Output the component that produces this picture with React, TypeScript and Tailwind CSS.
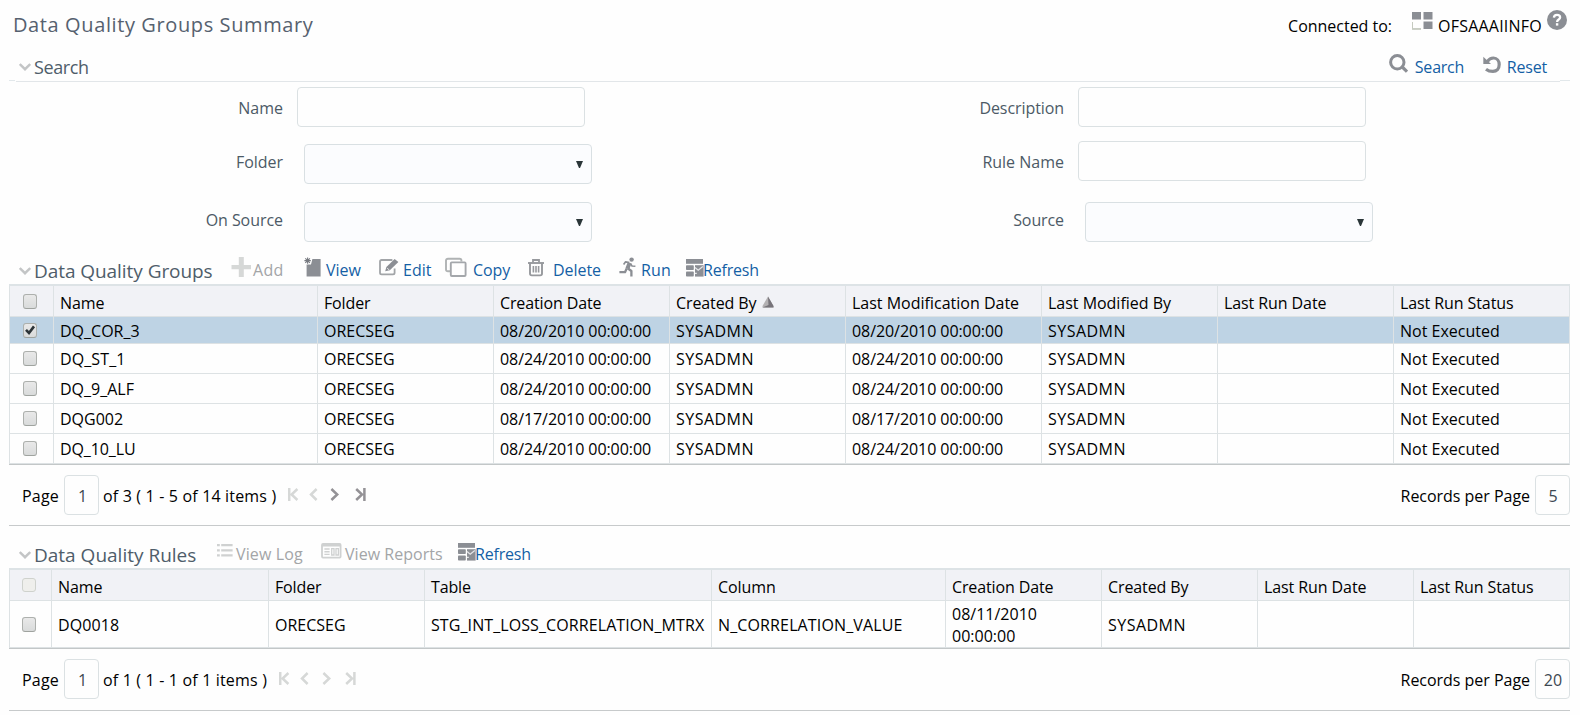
import type { ReactNode } from 'react';

const GRAY = '#8b8e94';
const PALE = '#d6d8d7';

/* ---------- icons ---------- */

const Chevron = () => (
  <svg width="12" height="8" viewBox="0 0 12 8" fill="none" stroke="#c3c5c6" strokeWidth="2.4">
    <path d="M0.8 1 L6 6.2 L11.2 1" />
  </svg>
);

const GridIcon = () => (
  <svg width="21" height="18" viewBox="0 0 21 18" fill={GRAY}>
    <rect x="0" y="0" width="9" height="7.5" />
    <rect x="11.5" y="0" width="9" height="7.5" />
    <rect x="11.5" y="9.5" width="9" height="7.5" />
    <path d="M0.5 10 V16.8 H9" fill="none" stroke="#c5cabf" />
    <path d="M0 17 H9" stroke="#c5cabf" strokeWidth="1.6" />
  </svg>
);

const HelpIcon = () => (
  <svg width="20" height="20" viewBox="0 0 20 20">
    <circle cx="10" cy="10" r="10" fill={GRAY} />
    <path d="M6.9 7.6 C7 5.6 8.3 4.8 10 4.8 C11.8 4.8 13.1 5.8 13.1 7.4 C13.1 9.6 10.1 9.4 10.1 11.9" fill="none" stroke="#fff" strokeWidth="2.3" />
    <rect x="8.9" y="13.2" width="2.4" height="2.4" fill="#fff" />
  </svg>
);

const SearchIcon = () => (
  <svg width="19" height="19" viewBox="0 0 19 19" fill="none" stroke={GRAY}>
    <circle cx="8.3" cy="8.3" r="6.7" strokeWidth="3" />
    <path d="M13.3 13 L18 17.7" strokeWidth="3.2" />
  </svg>
);

const ResetIcon = () => (
  <svg width="18" height="18" viewBox="0 0 18 18" fill="none" stroke={GRAY}>
    <path d="M4.2 5.6 C6 3 8.3 2 10.5 2 C14 2 16.2 5 16.2 8.6 C16.2 12.8 13.6 15.4 10 15.4 C7 15.4 4.8 14.6 3 13.2" strokeWidth="3.2" />
    <path d="M0.3 0.8 V8 H8 Z" fill={GRAY} stroke="none" />
  </svg>
);

const AddIcon = () => (
  <svg width="20" height="20" viewBox="0 0 20 20" fill={PALE}>
    <path d="M7.8 0 h5 v8 H20 v4.2 h-7.2 V20 h-5 v-7.8 H0.5 V8 H7.8 Z" />
  </svg>
);

const ViewIcon = () => (
  <svg width="18" height="20" viewBox="0 0 18 20">
    <path d="M8.4 2 H16.6 V19.6 H2.6 V7.6 H7 Z" fill={GRAY} />
    <path d="M3.6 0.4 V6.8 M0.4 3.6 H6.8 M1.3 1.3 L5.9 5.9 M5.9 1.3 L1.3 5.9" stroke="#777a80" strokeWidth="1.1" />
  </svg>
);

const EditIcon = () => (
  <svg width="20" height="20" viewBox="0 0 20 20" fill="none">
    <path d="M13.4 3 H2.6 Q1 3 1 4.6 V15.8 Q1 17.4 2.6 17.4 H14 Q15.6 17.4 15.6 15.8 V11.5" stroke="#a2a5a8" strokeWidth="1.8" />
    <path d="M6.2 14.2 L7.4 10 L15.6 1.9 L19.4 5.1 L10.8 13.2 Z" fill={GRAY} />
    <path d="M8.4 11.2 L10 12.8" stroke="#fff" />
  </svg>
);

const CopyIcon = () => (
  <svg width="22" height="20" viewBox="0 0 22 20" fill="none" strokeWidth="1.9">
    <path d="M5 14.2 H3 Q1 14.2 1 12.4 V3.6 Q1 1.8 3 1.8 H14.6 Q16.4 1.8 16.4 3.6 V4.6" stroke="#b0b3b4" />
    <rect x="5.8" y="5.4" width="14.8" height="13.6" rx="1" stroke="#a4a7ab" />
  </svg>
);

const DeleteIcon = () => (
  <svg width="16" height="20" viewBox="0 0 16 20" fill="none" stroke="#97999d">
    <path d="M0 6 H16" strokeWidth="1.9" />
    <path d="M5 5.4 V3 H11 V5.4" strokeWidth="1.8" />
    <path d="M2 6 V16.6 Q2 18.4 3.8 18.4 H12.2 Q14 18.4 14 16.6 V6" strokeWidth="1.9" />
    <path d="M5.4 9 V15.6 M8 9 V15.6 M10.6 9 V15.6" strokeWidth="1.6" />
  </svg>
);

const RunIcon = () => (
  <svg width="18" height="20" viewBox="0 0 18 20" fill="none" stroke={GRAY} strokeLinejoin="round">
    <circle cx="12.6" cy="2.6" r="2.2" fill={GRAY} stroke="none" />
    <path d="M4.6 7.4 L6.6 4.8 L10.4 5.6" strokeWidth="1.7" />
    <path d="M10.6 6 L8.4 11.4" strokeWidth="4" />
    <path d="M11.4 6.4 L13 9 L16.4 9.2" strokeWidth="1.6" />
    <path d="M8.6 11.2 L12.4 14 V19.6" strokeWidth="2.3" />
    <path d="M7.8 11.2 L6 15.2 H0.4" strokeWidth="2.3" />
  </svg>
);

const RefreshIcon = () => (
  <svg width="18" height="20" viewBox="0 0 18 20" fill={GRAY}>
    <rect x="0" y="2" width="17" height="4.8" />
    <rect x="0" y="8.2" width="7.8" height="4.9" rx="0.8" />
    <rect x="0" y="14.6" width="7.8" height="5" rx="0.8" />
    <path d="M9 8.2 H17.6 V19.6 H9 Z" />
    <path d="M9 10.6 L12.2 13.2 L16.8 9.4" fill="none" stroke="#e4e5e8" strokeWidth="1.3" />
    <path d="M9 16.4 H10.8" stroke="#e9eaec" strokeWidth="1.2" />
  </svg>
);

const LogIcon = () => (
  <svg width="16" height="20" viewBox="0 0 16 20" stroke="#cfd1d1" strokeWidth="2.2">
    <path d="M0 4.2 H2.8 M4.2 4.2 H15.6 M0 9.4 H2.8 M4.2 9.4 H15.6 M0 14.4 H2.8 M4.2 14.4 H15.6" />
  </svg>
);

const ReportsIcon = () => (
  <svg width="21" height="20" viewBox="0 0 21 20" fill="none" stroke="#cfd1d1">
    <rect x="1" y="3" width="18.6" height="13.6" rx="1" strokeWidth="1.8" />
    <path d="M1 4.2 H19.6" strokeWidth="2.6" />
    <path d="M3.4 8 H8.6 M3.4 10.7 H8.6 M3.4 13.4 H8.6" strokeWidth="1.4" />
    <path d="M10.7 7.6 H13 V14 H10.7 Z M15 7.6 H17.4 V14 H15 Z" strokeWidth="1.3" />
  </svg>
);

const NAV: Record<string, string> = {
  first: 'M1.2 0 V13 M9.4 1 L3.6 6.5 L9.4 12',
  prev: 'M7.6 1 L2 6.5 L7.6 12',
  next: 'M1.4 1 L7.2 6.5 L1.4 12',
  last: 'M1.2 1 L7 6.5 L1.2 12 M9.4 0 V13',
};

const NavIcon = ({ kind, on, className }: { kind: string; on?: boolean; className: string }) => (
  <span className={className}>
    <svg width="11" height="13" viewBox="0 0 11 13" fill="none" strokeWidth="2.5" stroke={on ? '#949296' : '#d6d8d7'}>
      <path d={NAV[kind]} />
    </svg>
  </span>
);

const Checkbox = ({ checked, pale }: { checked?: boolean; pale?: boolean }) => (
  <span
    className={
      pale
        ? 'block size-[14px] rounded-[3px] border border-[#cfd2cd] bg-[#efefec]'
        : 'block h-[15px] w-[14px] rounded-[3px] border border-[#adb0ad] border-b-[#9fa39f] bg-linear-to-b from-[#e9e9e9] to-[#d9dbdb]'
    }
  >
    {checked && (
      <svg width="12" height="12" viewBox="0 0 12 12" fill="none" stroke="#2c3438" strokeWidth="2.6">
        <path d="M2 5.8 L5 9 L10 2.4" />
      </svg>
    )}
  </span>
);

/* ---------- search form ---------- */

const TextBox = () => <input className="h-10 w-[288px] rounded border border-[#dbe1e3] bg-[#fefefe]" />;

const Dropdown = () => (
  <div className="flex h-10 w-[288px] items-start justify-end rounded border border-[#d9e0e3] bg-[#fbfcfe] pt-4 pr-2">
    <svg width="7" height="7" viewBox="0 0 7 7">
      <path d="M0 0 H7 L4 7 H3 Z" fill="#2a3538" />
    </svg>
  </div>
);

const Label = ({ className, children }: { className: string; children: ReactNode }) => (
  <label className={`text-right leading-6 text-[#4c5a66] ${className}`}>{children}</label>
);

/* ---------- toolbars ---------- */

const Action = ({ icon, gutter, className, off, children }: { icon: ReactNode; gutter: string; className: string; off?: boolean; children: ReactNode }) => (
  <div className={`flex shrink-0 items-start whitespace-nowrap ${className}`}>
    <span className={`shrink-0 pt-px ${gutter}`}>{icon}</span>
    <span className={off ? 'pt-0.5 text-[#a3a5a7]' : 'pt-0.5 text-[#145fa5]'}>{children}</span>
  </div>
);

const Heading = ({ className, children }: { className: string; children: ReactNode }) => (
  <h2 className={`flex shrink-0 items-start gap-[3px] pl-[10px] leading-7 whitespace-nowrap text-[#4f5d6a] ${className}`}>
    <span className="pt-[11px]">
      <Chevron />
    </span>
    <span className="pt-px">{children}</span>
  </h2>
);

/* ---------- grids ---------- */

const groupHeads = [
  ['Name', 'tracking-[-0.1px]'],
  ['Folder', 'tracking-[-0.14px]'],
  ['Creation Date', 'tracking-[-0.13px]'],
  ['Created By', 'tracking-[-0.1px]'],
  ['Last Modification Date', ''],
  ['Last Modified By', 'tracking-[-0.02px]'],
  ['Last Run Date', 'tracking-[-0.09px]'],
  ['Last Run Status', 'tracking-[-0.09px]'],
];

const groups = [
  { name: 'DQ_COR_3', date: '08/20/2010 00:00:00', track: '', selected: true },
  { name: 'DQ_ST_1', date: '08/24/2010 00:00:00', track: 'tracking-[0.1px]' },
  { name: 'DQ_9_ALF', date: '08/24/2010 00:00:00', track: '' },
  { name: 'DQG002', date: '08/17/2010 00:00:00', track: '' },
  { name: 'DQ_10_LU', date: '08/24/2010 00:00:00', track: 'tracking-[-0.1px]' },
];

const ruleHeads = [
  ['Name', 'tracking-[-0.1px]'],
  ['Folder', 'tracking-[-0.14px]'],
  ['Table', 'tracking-[-0.13px]'],
  ['Column', 'tracking-[-0.07px]'],
  ['Creation Date', 'tracking-[-0.13px]'],
  ['Created By', 'tracking-[-0.1px]'],
  ['Last Run Date', 'tracking-[-0.09px]'],
  ['Last Run Status', 'tracking-[-0.09px]'],
];

const groupCols = 'grid grid-cols-[44px_264px_176px_176px_176px_196px_176px_176px_176px]';
const ruleCols = 'grid grid-cols-[42px_217px_156px_287px_234px_156px_156px_156px_156px]';

const Cell = ({ className = '', children }: { className?: string; children?: ReactNode }) => (
  <div className={`border-l border-[#dde2e4] pl-[6px] leading-6 whitespace-nowrap ${className}`}>{children}</div>
);

const Pager = ({ range, size, track, className, nav }: { range: string; size: string; track: string; className: string; nav: ReactNode }) => (
  <div className={`flex items-start border-b border-[#c7cacb] pt-[10px] ${className}`}>
    <span className="w-[55px] pt-[9px] pl-[13px] leading-6 tracking-[0.2px]">Page</span>
    <span className="h-10 w-[35px] rounded border border-[#dbe1e3] pt-2 pl-0.5 text-center leading-6 text-[#3d4852]">1</span>
    <span className={`pt-[9px] pl-1 leading-6 whitespace-pre ${track}`}>{range}</span>
    <div className="flex pt-[13px]">{nav}</div>
    <span className="ml-auto pt-[9px] pr-[5px] leading-6 tracking-[-0.03px]">Records per Page</span>
    <span className="h-10 w-[35px] rounded border border-[#dbe1e3] pt-2 pl-px text-center leading-6 text-[#3d4852]">{size}</span>
  </div>
);

export default function App() {
  return (
    <div className="h-[715px] w-[1580px] overflow-hidden bg-[#fefefe] pr-[10px] pl-[9px] font-['Open_Sans','Noto_Sans',sans-serif] text-base leading-6 text-black">
      {/* page header */}
      <header className="flex h-[50px] items-start">
        <h1 className="pt-[10px] pl-1 text-[20px] leading-[30px] tracking-[0.61px] text-[#56616f]">Data Quality Groups Summary</h1>
        <span className="ml-auto pt-[14px] tracking-[-0.02px]">Connected to:</span>
        <span className="w-[46px] pt-3 pl-5">
          <GridIcon />
        </span>
        <span className="w-[109px] pt-[14px] tracking-[0.22px]">OFSAAAIINFO</span>
        <span className="pt-[10px] pr-[3px]">
          <HelpIcon />
        </span>
      </header>

      {/* search */}
      <div className="flex h-[30px] items-start">
        <Heading className="pt-0.5 text-[18px] tracking-[-0.4px]">Search</Heading>
        <div className="ml-auto flex pr-[23px] text-[#145fa5]">
          <span className="w-[26px] pt-1">
            <SearchIcon />
          </span>
          <span className="w-[68px] pt-[5px] tracking-[-0.22px]">Search</span>
          <span className="w-[24px] pt-[6px]">
            <ResetIcon />
          </span>
          <span className="pt-[5px] tracking-[-0.2px]">Reset</span>
        </div>
      </div>
      <div className="flex h-[7px] items-start">
        <span className="h-px w-[6px] bg-[#e2e8eb]" />
        <span className="mt-px ml-px h-px flex-1 bg-[#e2e6e9]" />
        <span className="h-px w-[10px] bg-[#e2e8eb]" />
      </div>

      <div className="flex h-[161px]">
        <div className="flex w-[781px] flex-col">
          <div className="flex h-[54px]">
            <Label className="w-[274px] pt-[9px]">Name</Label>
            <div className="pl-[14px]">
              <TextBox />
            </div>
          </div>
          <div className="flex h-[58px]">
            <Label className="w-[274px] pt-[9px] tracking-[-0.05px]">Folder</Label>
            <div className="pt-[3px] pl-[21px]">
              <Dropdown />
            </div>
          </div>
          <div className="flex h-[49px]">
            <Label className="w-[274px] pt-[9px] tracking-[-0.05px]">On Source</Label>
            <div className="pt-[3px] pl-[21px]">
              <Dropdown />
            </div>
          </div>
        </div>
        <div className="flex flex-col">
          <div className="flex h-[54px]">
            <Label className="w-[274px] pt-[9px] tracking-[-0.08px]">Description</Label>
            <div className="pl-[14px]">
              <TextBox />
            </div>
          </div>
          <div className="flex h-[58px]">
            <Label className="w-[274px] pt-[9px]">Rule Name</Label>
            <div className="pl-[14px]">
              <TextBox />
            </div>
          </div>
          <div className="flex h-[49px]">
            <Label className="w-[274px] pt-[9px] tracking-[-0.1px]">Source</Label>
            <div className="pt-[3px] pl-[21px]">
              <Dropdown />
            </div>
          </div>
        </div>
      </div>

      {/* groups */}
      <div className="flex h-9 items-start pt-2">
        <Heading className="w-[222px] text-[19px] tracking-[-0.06px]">Data Quality Groups</Heading>
        <Action icon={<AddIcon />} gutter="w-[22px]" className="w-[73px] tracking-[0.3px]" off>Add</Action>
        <Action icon={<ViewIcon />} gutter="w-[22px]" className="w-[75px]">View</Action>
        <Action icon={<EditIcon />} gutter="w-[24px]" className="w-[66px]">Edit</Action>
        <Action icon={<CopyIcon />} gutter="w-[28px]" className="w-[83px] tracking-[-0.1px]">Copy</Action>
        <Action icon={<DeleteIcon />} gutter="w-[25px]" className="w-[91px] tracking-[-0.06px]">Delete</Action>
        <Action icon={<RunIcon />} gutter="w-[22px]" className="w-[67px] tracking-[0.1px]">Run</Action>
        <Action icon={<RefreshIcon />} gutter="w-[17px]" className="tracking-[-0.2px]">Refresh</Action>
      </div>

      <div className="border-t-2 border-r border-b border-[#dde3e6] border-b-[#c3c7c8]">
        <div className={`h-[31px] border-b border-[#dde2e4] bg-[#f1f2f6] ${groupCols}`}>
          <Cell className="pt-2 !pl-[13px]">
            <Checkbox />
          </Cell>
          {groupHeads.map(([t, track]) => (
            <Cell key={t} className={`flex gap-[6px] pt-[5px] ${track}`}>
              {t}
              {t === 'Created By' && (
                <svg className="mt-[5px]" width="12" height="12" viewBox="0 0 12 12">
                  <path d="M6 0.5 L0.5 10 V11.5 H11.5 V10 Z" fill="#b3b1b3" />
                  <path d="M6 0.5 L6.5 9 L0.5 11.5 H11.5 V10 Z" fill="#77747a" />
                </svg>
              )}
            </Cell>
          ))}
        </div>
        {groups.map((g) => {
          const pad = g.selected ? 'pt-0.5' : 'pt-[3px]';
          return (
            <div
              key={g.name}
              className={`border-b border-[#dde2e4] ${groupCols} ${g.selected ? 'h-[27px] bg-[#bed3e4]' : 'h-[30px]'}`}
            >
              <Cell className={`!pl-[13px] ${g.selected ? 'pt-[6px]' : 'pt-[7px]'}`}>
                <Checkbox checked={g.selected} />
              </Cell>
              <Cell className={`${pad} ${g.track}`}>{g.name}</Cell>
              <Cell className={pad}>ORECSEG</Cell>
              <Cell className={`${pad} tracking-[-0.07px]`}>{g.date}</Cell>
              <Cell className={`${pad} tracking-[0.48px]`}>SYSADMN</Cell>
              <Cell className={`${pad} tracking-[-0.07px]`}>{g.date}</Cell>
              <Cell className={`${pad} tracking-[0.48px]`}>SYSADMN</Cell>
              <Cell />
              <Cell className={pad}>Not Executed</Cell>
            </div>
          );
        })}
      </div>

      <Pager
        className="h-[61px]"
        range="of 3 ( 1 - 5 of 14 items )"
        track="w-[189px] tracking-[0.17px]"
        size="5"
        nav={
          <>
            <NavIcon kind="first" className="w-[21px]" />
            <NavIcon kind="prev" className="w-[21px]" />
            <NavIcon kind="next" className="w-[25px]" on />
            <NavIcon kind="last" className="w-4" on />
          </>
        }
      />

      {/* rules */}
      <div className="flex h-[42px] items-start pt-[14px]">
        <Heading className="w-[208px] text-[19px]">Data Quality Rules</Heading>
        <Action icon={<LogIcon />} gutter="w-[19px]" className="w-[104px] tracking-[0.13px]" off>View Log</Action>
        <Action icon={<ReportsIcon />} gutter="w-[24px]" className="w-[137px] tracking-[0.03px]" off>View Reports</Action>
        <Action icon={<RefreshIcon />} gutter="w-[17px]" className="tracking-[-0.2px]">Refresh</Action>
      </div>

      <div className="border-t-2 border-r border-b border-[#dde3e6] border-b-[#c3c7c8]">
        <div className={`h-[31px] border-b border-[#dde2e4] bg-[#f1f2f6] ${ruleCols}`}>
          <Cell className="pt-2 !pl-3">
            <Checkbox pale />
          </Cell>
          {ruleHeads.map(([t, track]) => (
            <Cell key={t} className={`pt-[5px] ${track}`}>{t}</Cell>
          ))}
        </div>
        <div className={`h-[47px] border-b border-[#dde2e4] ${ruleCols}`}>
          <Cell className="pt-4 !pl-3">
            <Checkbox />
          </Cell>
          <Cell className="pt-3 tracking-[0.1px]">DQ0018</Cell>
          <Cell className="pt-3">ORECSEG</Cell>
          <Cell className="pt-3 tracking-[0.09px]">STG_INT_LOSS_CORRELATION_MTRX</Cell>
          <Cell className="pt-3 tracking-[0.13px]">N_CORRELATION_VALUE</Cell>
          <Cell className="pt-0.5 !leading-[22px]">
            08/11/2010
            <br />
            00:00:00
          </Cell>
          <Cell className="pt-3 tracking-[0.48px]">SYSADMN</Cell>
          <Cell />
          <Cell />
        </div>
      </div>

      <Pager
        className="h-[62px]"
        range="of 1 ( 1 - 1 of 1 items )"
        track="w-[180px] tracking-[0.17px]"
        size="20"
        nav={
          <>
            <NavIcon kind="first" className="w-[21px]" />
            <NavIcon kind="prev" className="w-[22px]" />
            <NavIcon kind="next" className="w-[23px]" />
            <NavIcon kind="last" className="w-4" />
          </>
        }
      />
    </div>
  );
}
